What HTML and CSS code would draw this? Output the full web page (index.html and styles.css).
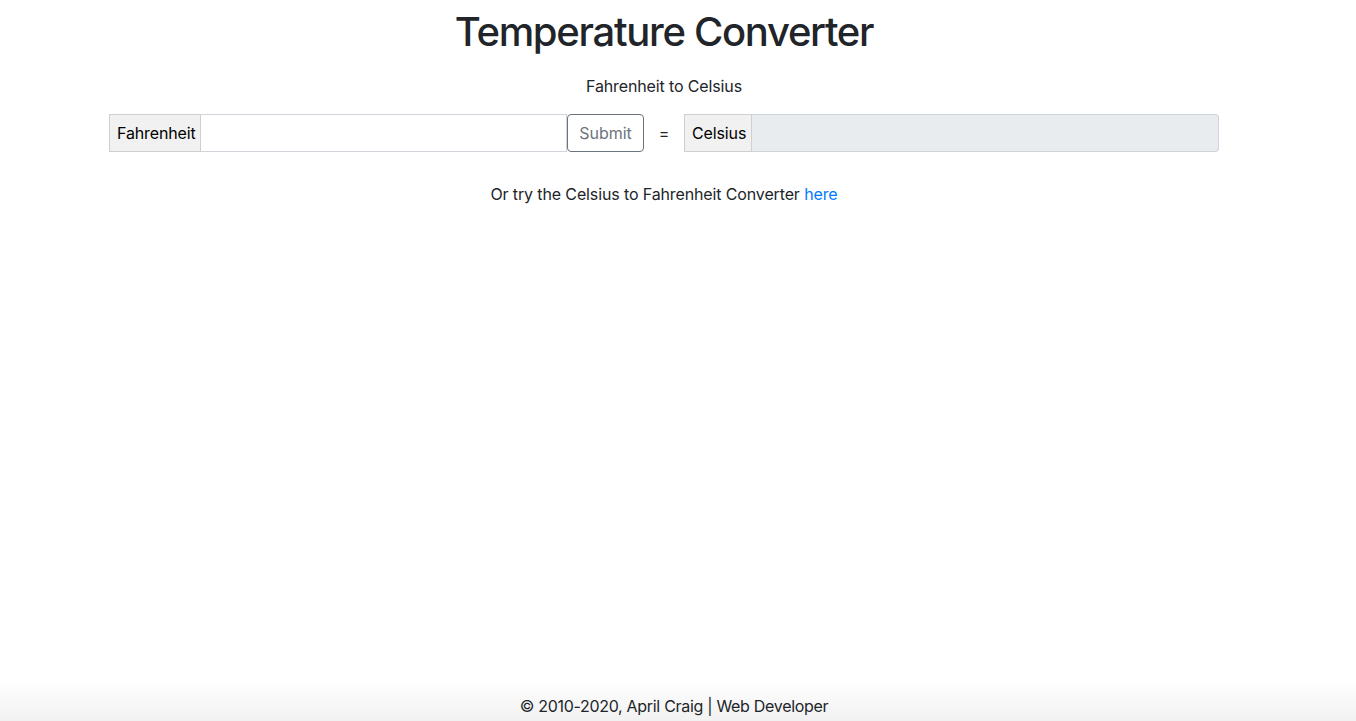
FILE: index.html
```html
<!DOCTYPE html>
<html lang="en">
<head>
<meta charset="utf-8">
<title>Temperature Converter</title>
<link rel="stylesheet" href="styles.css">
</head>
<body>
<main class="container">
  <h1 class="title">Temperature Converter</h1>
  <p class="subtitle">Fahrenheit to Celsius</p>
  <form class="converter">
    <div class="group group-in">
      <label class="addon" for="f">Fahrenheit</label>
      <input class="field" id="f" type="text">
    </div>
    <button class="btn" type="button">Submit</button>
    <span class="equals">=</span>
    <div class="group group-out">
      <label class="addon" for="c">Celsius</label>
      <input class="field field-disabled" id="c" type="text" disabled>
    </div>
  </form>
  <p class="alt">Or try the Celsius to Fahrenheit Converter <a href="#">here</a></p>
</main>
<footer class="footer">© 2010-2020, April Craig | Web Developer</footer>
</body>
</html>
```

FILE: styles.css
```css
* { box-sizing: border-box; }
html, body { height: 100%; }
body {
  margin: 0;
  font-family: Inter, "Liberation Sans", Arial, sans-serif;
  font-size: 16px;
  line-height: 1.5;
  letter-spacing: -0.13px;
  color: #212529;
  background: #fff;
}
.container {
  max-width: 1168px;
  margin: 0 auto;
  padding: 0 43px 0 15px;
}
.title {
  margin: 8px 0 0;
  font-size: 40px;
  font-weight: 500;
  line-height: 1.2;
  letter-spacing: -1.3px;
  text-align: center;
}
.subtitle {
  margin: 18px 0 0;
  text-align: center;
}
.converter {
  display: flex;
  align-items: center;
  margin-top: 16px;
}
.group {
  display: flex;
  height: 38px;
}
.group-in { width: 458px; }
.group-out { flex: 1; }
.addon {
  display: flex;
  align-items: center;
  padding: 0 7px;
  background: #f1f1f1;
  border: 1px solid #cfcfcf;
  color: #000;
  white-space: nowrap;
}
.group-in .addon { width: 92px; }
.group-out .addon { width: 68px; }
.field {
  flex: 1;
  min-width: 0;
  height: 38px;
  margin: 0;
  padding: 6px 12px;
  font: inherit;
  border: 1px solid #ced4da;
  border-left: 0;
  background: #fff;
}
.field-disabled {
  background: #e9ecef;
  border-radius: 0 4px 4px 0;
}
.btn {
  width: 77px;
  height: 38px;
  font: inherit;
  color: #6c757d;
  background: #fff;
  border: 1px solid #6c757d;
  border-radius: 4px;
  padding: 0;
}
.equals {
  width: 40px;
  text-align: center;
}
.alt {
  margin: 30px 0 0;
  text-align: center;
}
.alt a {
  color: #007bff;
  text-decoration: none;
}
.footer {
  position: fixed;
  left: 0;
  right: 0;
  bottom: 0;
  height: 40px;
  padding: 13px 8px 0 0;
  line-height: 24px;
  letter-spacing: -0.3px;
  text-align: center;
  background: linear-gradient(#ffffff, #f1f1f1);
}
```
